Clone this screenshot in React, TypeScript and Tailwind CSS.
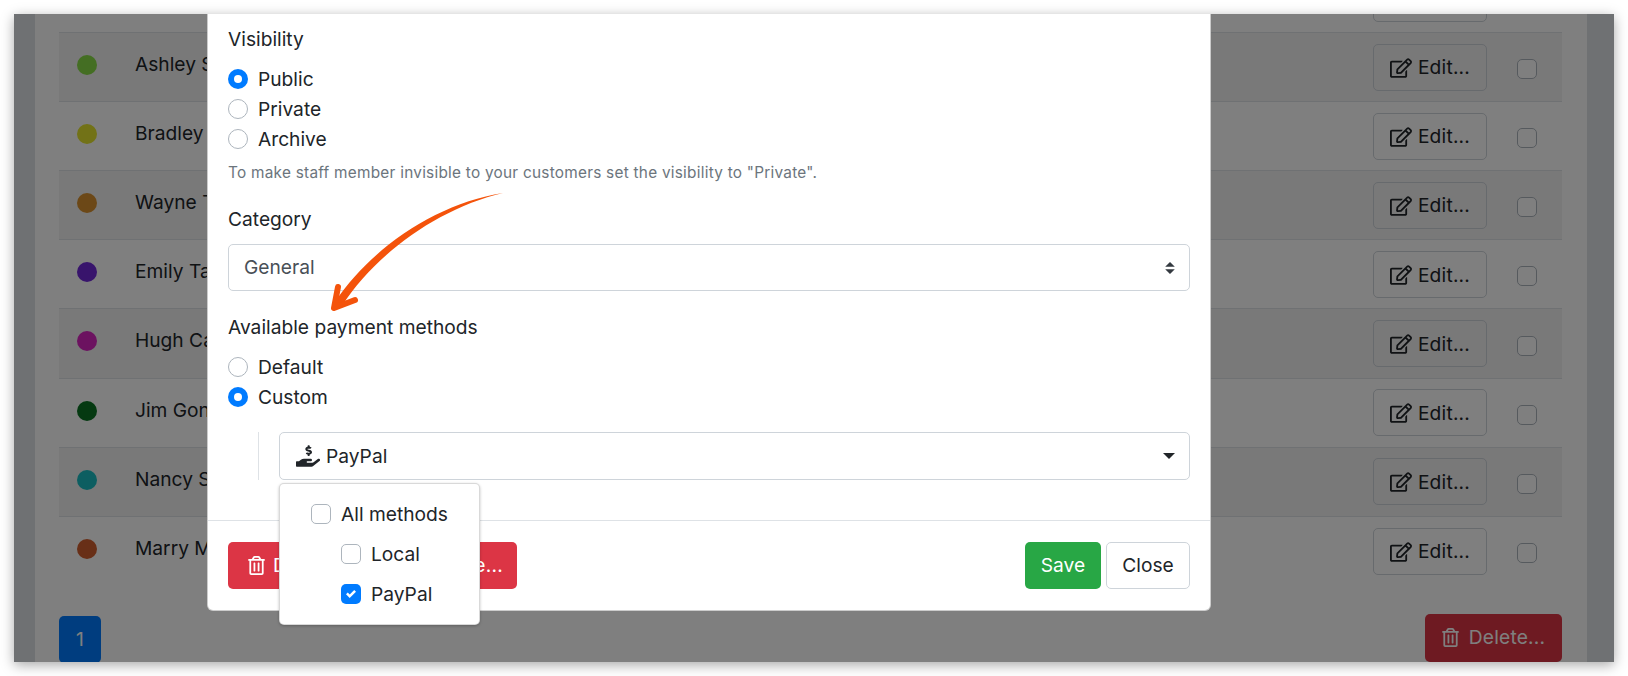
import React from 'react';
import { FaRegEdit, FaRegTrashAlt, FaHandHoldingUsd } from 'react-icons/fa';

const staff = [
  { name: 'Lisa Baker', color: 'bg-[#88dc46]' },
  { name: 'Ashley Stone', color: 'bg-[#88dc46]' },
  { name: 'Bradley Tannen', color: 'bg-[#e4e42e]' },
  { name: 'Wayne Turner', color: 'bg-[#d8912f]' },
  { name: 'Emily Taylor', color: 'bg-[#7028d8]' },
  { name: 'Hugh Canberg', color: 'bg-[#d824c0]' },
  { name: 'Jim Gonzalez', color: 'bg-[#0a7222]' },
  { name: 'Nancy Stone', color: 'bg-[#18bcc2]' },
  { name: 'Marry Murphy', color: 'bg-[#d05e2e]' },
];

const Radio = ({ label, checked }: { label: string; checked?: boolean }) => (
  <label className="flex items-center h-[30px]">
    {checked ? (
      <span className="w-5 h-5 rounded-full bg-[#007bff] flex items-center justify-center">
        <span className="w-2 h-2 rounded-full bg-white" />
      </span>
    ) : (
      <span className="w-5 h-5 rounded-full bg-white border border-[#adb5bd]" />
    )}
    <span className="ml-[10px]">{label}</span>
  </label>
);

const Check = ({ label, checked, indent }: { label: string; checked?: boolean; indent?: boolean }) => (
  <label className={`flex items-center h-10 ${indent ? 'pl-[30px]' : ''}`}>
    {checked ? (
      <span className="w-5 h-5 rounded-[5px] bg-[#007bff] flex items-center justify-center">
        <svg viewBox="0 0 8 8" className="w-[10px] h-[10px]">
          <path fill="#fff" d="M6.564.75l-3.59 3.612-1.538-1.55L0 4.26l2.974 2.99L8 2.193z" />
        </svg>
      </span>
    ) : (
      <span className="w-5 h-5 rounded-[5px] bg-white border border-[#adb5bd]" />
    )}
    <span className="ml-[10px]">{label}</span>
  </label>
);

export default function App() {
  return (
    <div className="w-full h-[676px] bg-white p-[14px] font-['Inter',sans-serif] text-[19.2px] text-[#212529]">
      <div className="relative w-[1600px] h-[648px] overflow-hidden bg-[#dee2e6] shadow-[0_3px_12px_rgba(0,0,0,0.35)]">
        {/* pagina por tras do modal */}
        <div className="flex flex-col mx-5 w-[1554px] h-full bg-white border-x border-[#dee2e6] pl-6 pr-[25px]">
          <div className="-mt-[50px] shrink-0">
            {staff.map((s, i) => (
              <div
                key={s.name}
                className={`flex items-center h-[69.1px] ${i < staff.length - 1 ? 'border-b border-[#dee2e6]' : ''} ${i % 2 === 1 ? 'bg-[#f2f2f2]' : ''}`}
              >
                <span className={`self-start mt-[22px] ml-[18px] w-5 h-5 rounded-full ${s.color}`} />
                <span className="self-start mt-[17px] ml-[38px] leading-[29px]">{s.name}</span>
                <button className="ml-auto flex items-center justify-center gap-[6px] w-[114px] h-[47px] pt-px rounded-[5px] border border-[#ced4da]">
                  <FaRegEdit className="w-[22px] h-[20px]" />
                  <span className="tracking-[0.2px]">Edit...</span>
                </button>
                <span className="mt-1 ml-[30px] mr-[25px] w-5 h-5 rounded-[5px] bg-white border border-[#adb5bd]" />
              </div>
            ))}
          </div>
          <div className="flex items-start justify-between mt-[30px]">
            <span className="w-[42px] h-[47px] flex items-center justify-center rounded-[5px] bg-[#007bff] text-white">1</span>
            <button className="flex items-center justify-center gap-[10px] w-[137px] h-[48px] -mt-[2px] rounded-[5px] bg-[#dc3545] text-white">
              <FaRegTrashAlt className="w-[17px] h-[19px]" />
              <span className="tracking-[0.2px]">Delete...</span>
            </button>
          </div>
        </div>

        <div className="absolute inset-0 bg-black/50" />

        {/* modal */}
        <div className="absolute top-0 left-[193px] w-[1004px] h-[597px] bg-white rounded-b-[6px] border border-t-0 border-black/20 flex flex-col">
          <div className="flex-1 px-5 pt-[11px]">
            <div className="h-[29px] leading-[29px] mb-[10px]">Visibility</div>
            <Radio label="Public" checked />
            <Radio label="Private" />
            <Radio label="Archive" />
            <p className="mt-[7px] h-[23px] leading-[23px] text-[15.36px] tracking-[0.25px] text-[#6c757d]">
              To make staff member invisible to your customers set the visibility to "Private".
            </p>
            <div className="mt-[21px] h-[29px] leading-[29px] mb-[10px]">Category</div>
            <div className="flex items-center justify-between h-[47px] rounded-[5px] border border-[#ced4da] pl-[15px] pr-[14px] text-[#495057]">
              General
              <svg viewBox="0 0 4 5" className="w-[10px] h-[12px]">
                <path fill="#343a40" d="M2 0L0 2h4zm0 5L0 3h4z" />
              </svg>
            </div>
            <div className="mt-[22px] h-[29px] leading-[29px] mb-[10px]">Available payment methods</div>
            <Radio label="Default" />
            <Radio label="Custom" checked />
            <div className="mt-[20px] ml-[30px] pl-5 border-l border-[#dee2e6] relative">
              <div className="flex items-center h-[48px] rounded-[5px] border border-[#ced4da] pl-4 pr-[14px]">
                <FaHandHoldingUsd className="w-6 h-6 text-[#212529]" />
                <span className="ml-[6px]">PayPal</span>
                <span className="ml-auto border-x-[6px] border-t-[6px] border-x-transparent border-t-[#212529]" />
              </div>
              <div className="absolute left-5 top-[51px] w-[201px] h-[142px] bg-white rounded-[5px] border border-black/15 shadow-[0_1px_3px_rgba(0,0,0,0.25)] pl-[31px] pt-[10px]">
                <Check label="All methods" />
                <Check label="Local" indent />
                <Check label="PayPal" checked indent />
              </div>
            </div>
          </div>
          <div className="flex items-center justify-between h-[90px] border-t border-[#dee2e6] px-5">
            <button className="flex items-center gap-2 w-[289px] h-[47px] pl-5 rounded-[5px] bg-[#dc3545] text-white">
              <FaRegTrashAlt className="w-[17px] h-[19px]" />
              <span className="tracking-[0.3px]">Delete this staff profile...</span>
            </button>
            <div className="flex gap-[5px]">
              <button className="w-[76px] h-[47px] rounded-[5px] bg-[#28a745] text-white">Save</button>
              <button className="w-[84px] h-[47px] rounded-[5px] border border-[#ced4da]">Close</button>
            </div>
          </div>
        </div>

        {/* seta */}
        <svg viewBox="0 0 200 140" className="absolute left-[303px] top-[176px] w-[200px] h-[140px]">
          <path fill="#f4530b" d="M186 3 C120 13 54 58 18 112 L25 116 C58 64 122 18 186 3 Z" />
          <path
            fill="none"
            stroke="#f4530b"
            strokeWidth="6"
            strokeLinecap="round"
            strokeLinejoin="round"
            d="M21 97 L17 118 L38 110"
          />
        </svg>
      </div>
    </div>
  );
}
